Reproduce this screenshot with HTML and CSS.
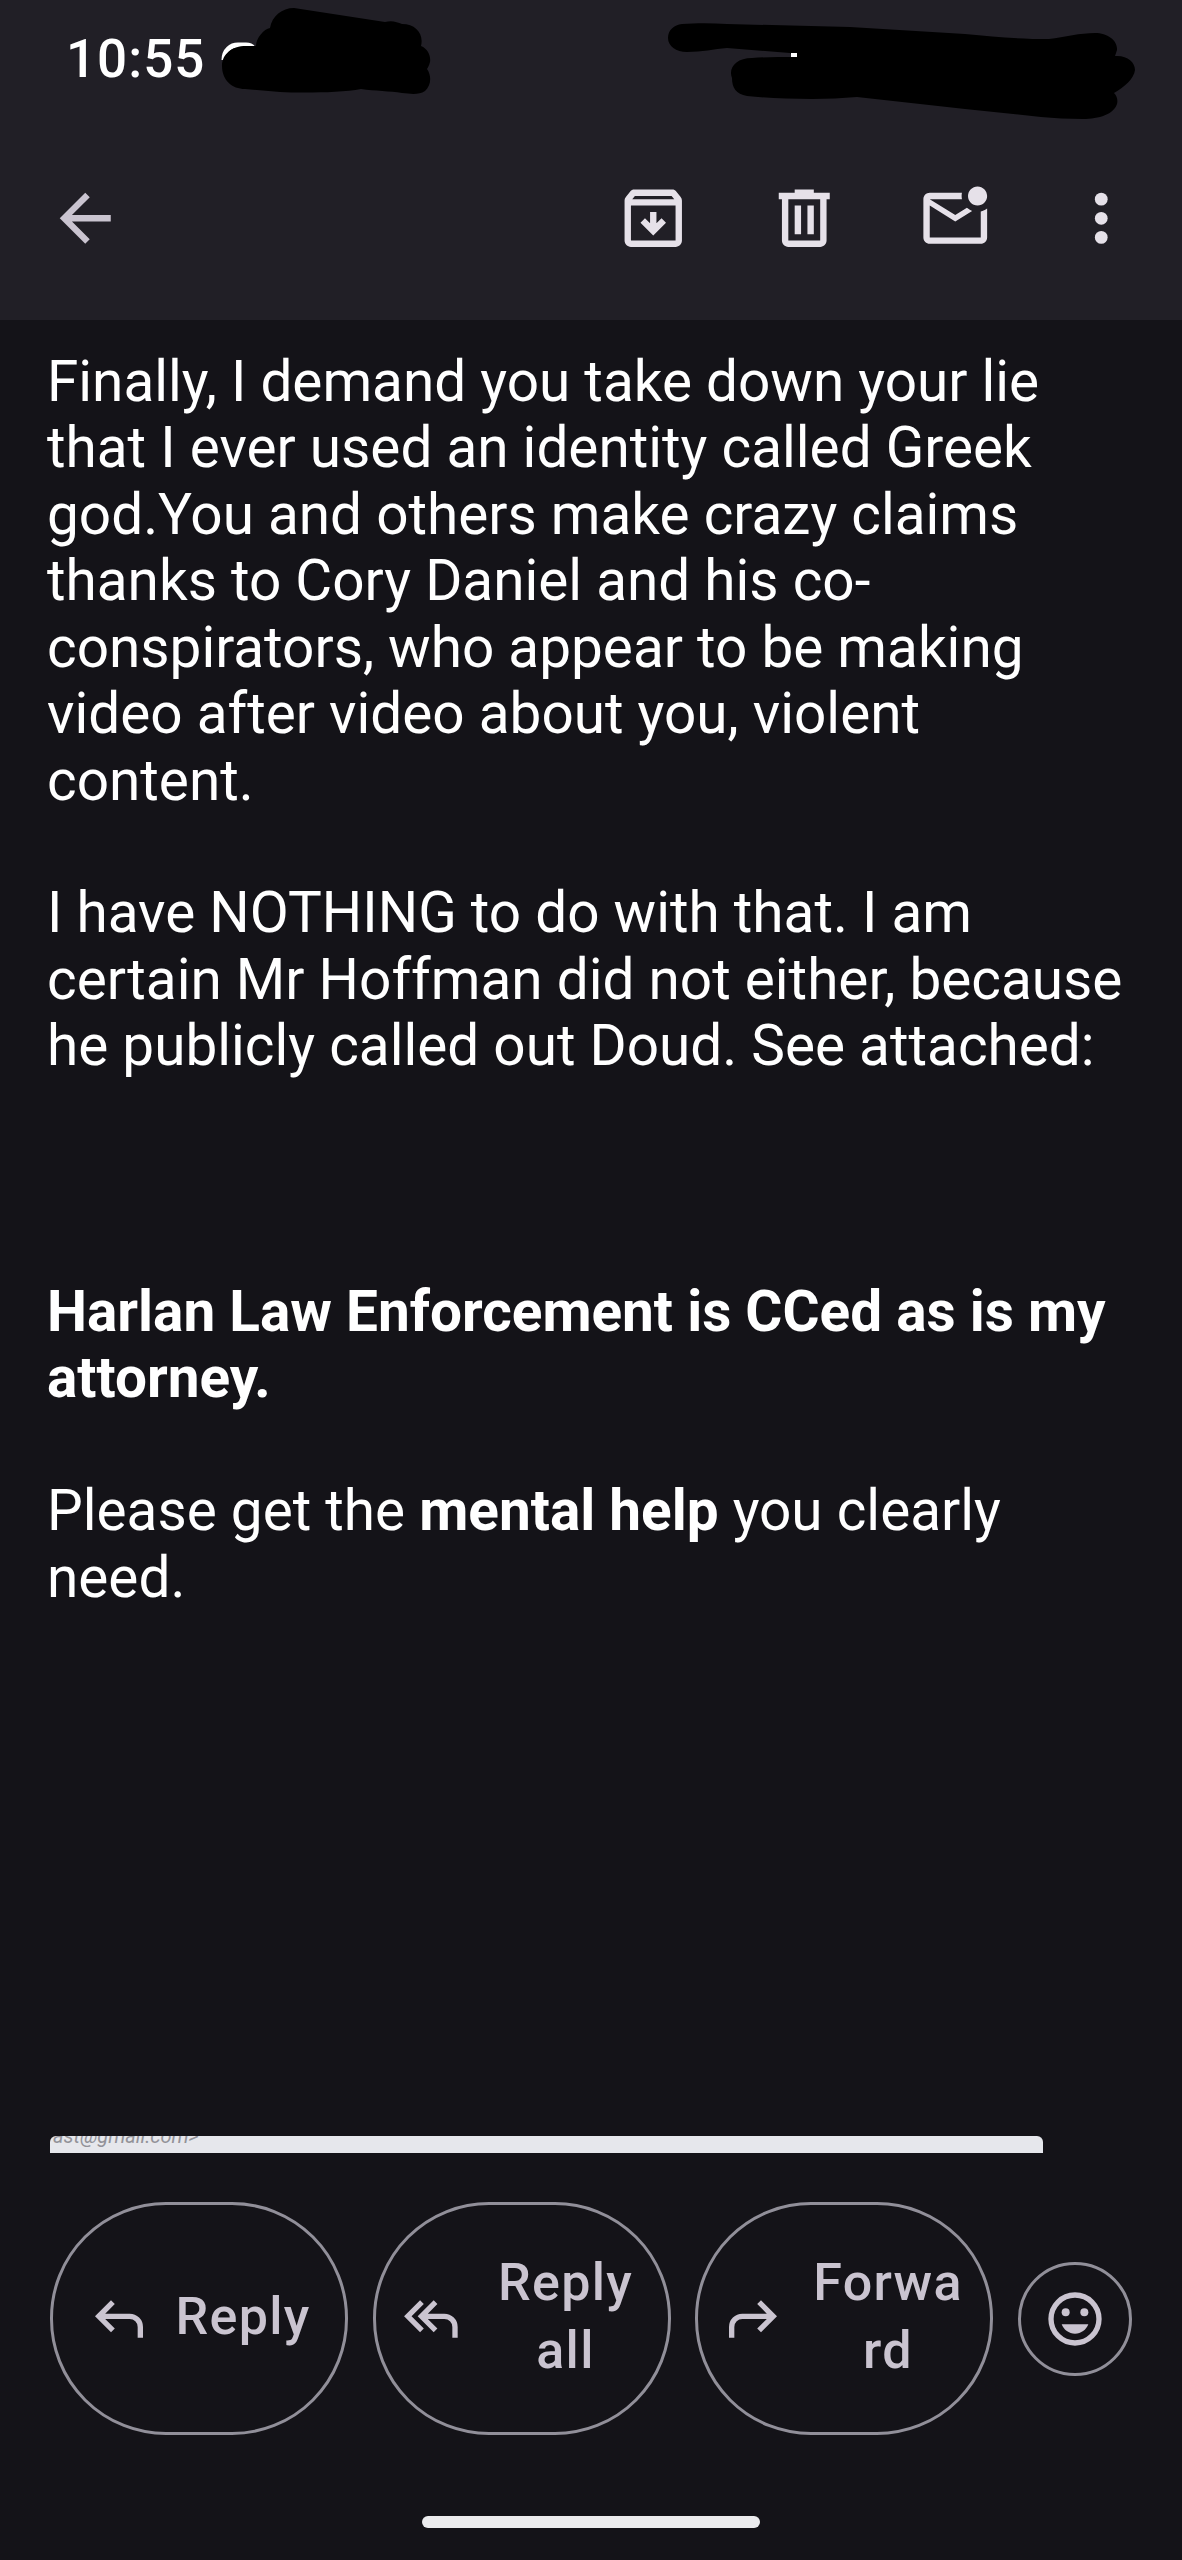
FILE: index.html
```html
<!DOCTYPE html>
<html lang="en">
    <head>
        <meta charset="UTF-8">
        <title>Mail</title>
        <meta name="viewport" content="width=device-width, initial-scale=1.0">
        <link rel="stylesheet" href="styles.css">
    </head>
    <body>
        <header>
            <div class="status">
                <span class="clock">10:55</span>
                <svg class="marker" viewBox="0 0 1182 130">
                    <path class="hint" d="M224 60C224 50 231 45 238 45H246Q251 45 253 48"/>
                    <path d="M222 66C222 54 232 46 246 46L256 46C256 38 264 29 270 28C272 16 282 8 294 8L385 22C392 20 397 22 402 24C416 24 424 34 421 46C428 49 431 56 430 62C429 66 428 67 427 69C432 76 431 86 425 91C419 95 411 94 402 93C390 91 375 91 361 89C340 93 300 93 280 92L245 89C232 89 222 80 222 66Z"/>
                    <path d="M668 38C668 30 674 25 682 24C696 23 712 23 727 24L850 27L965 34C995 37 1020 39 1049 39C1065 37 1080 33 1095 33C1108 33 1118 41 1117 50L1115 56C1127 55 1135 62 1135 70C1134 79 1124 87 1114 93C1117 96 1118 100 1117 104C1114 114 1099 119 1083 119C1068 119 1054 118 1041 117L965 109L857 97C842 98 828 99 812 99C788 99 765 98 747 96C736 94 732 88 732 78C728 68 736 58 752 58C766 57 780 57 793 57L790 53L727 48C714 49 702 52 687 52C676 52 668 46 668 38Z"/>
                    <rect class="dot" x="791" y="53" width="6" height="4"/>
                </svg>
            </div>
            <nav class="toolbar">
                <svg class="icon back" viewBox="0 0 24 24"><path d="M20 11H7.83l5.59-5.59L12 4l-8 8 8 8 1.41-1.41L7.83 13H20z"/></svg>
                <svg class="icon archive" viewBox="0 0 24 24"><path d="M20.54 5.23l-1.39-1.68C18.88 3.21 18.47 3 18 3H6c-.47 0-.88.21-1.16.55L3.46 5.23C3.17 5.57 3 6.02 3 6.5V19c0 1.1.9 2 2 2h14c1.1 0 2-.9 2-2V6.5c0-.48-.17-.93-.46-1.27zM6.24 5h11.52l.83 1H5.42zM5 19V8h14v11zM12 17.4l4-4-1.4-1.4-1.6 1.6V10h-2v3.6l-1.6-1.6L8 13.4z"/></svg>
                <svg class="icon delete" viewBox="0 0 24 24"><path d="M9 3v1H4v2h1v13c0 1.1.9 2 2 2h10c1.1 0 2-.9 2-2V6h1V4h-5V3zM7 6h10v13H7zm2 2v9h2V8zm4 0v9h2V8z"/></svg>
                <svg class="icon unread" viewBox="0 0 24 24"><path d="M22 8.98V18c0 1.1-.9 2-2 2H4c-1.1 0-2-.9-2-2V6c0-1.1.9-2 2-2h10.1c-.06.32-.1.66-.1 1s.04.68.1 1H4l8 5 3.67-2.29c.47.43 1.02.76 1.63.98L12 13 4 8v10h16V9.9c.74-.15 1.42-.48 2-.92zM16 5c0 1.66 1.34 3 3 3s3-1.34 3-3-1.34-3-3-3-3 1.34-3 3z"/></svg>
                <svg class="icon more" viewBox="0 0 24 24"><circle cx="12" cy="6" r="2"/><circle cx="12" cy="12" r="2"/><circle cx="12" cy="18" r="2"/></svg>
            </nav>
        </header>
        <main>
            Finally, I demand you take down your lie<br>
            that I ever used an identity called Greek<br>
            god.You and others make crazy claims<br>
            thanks to Cory Daniel and his co-<br>
            conspirators, who appear to be making<br>
            video after video about you, violent<br>
            content.<br>
            <br>
            I have NOTHING to do with that. I am<br>
            certain Mr Hoffman did not either, because<br>
            he publicly called out Doud. See attached:<br>
            <br>
            <br>
            <br>
            <b>Harlan Law Enforcement is CCed as is my<br>
            attorney.</b><br>
            <br>
            Please get the <b>mental help</b> you clearly<br>
            need.
        </main>
        <div class="attachment">ast@gmail.com&gt;</div>
        <div class="actions">
            <button class="pill">
                <svg viewBox="0 0 24 24"><path d="M19 19v-4q0-1.25-.875-2.125T16 12H6.825l3.6 3.6L9 17l-6-6 6-6 1.425 1.4L6.825 10H16q2.075 0 3.538 1.463T21 15v4z"/></svg>
                <span>Reply</span>
            </button>
            <button class="pill wide">
                <svg viewBox="0 0 24 24"><path d="M7.9 17l-6-6 6-6 1.4 1.4L4.7 11l4.6 4.6zM20 19v-4q0-1.25-.875-2.125T17 12h-6.2l3.6 3.6L13 17l-6-6 6-6 1.4 1.4-3.6 3.6H17q2.075 0 3.54 1.46T22 15v4z"/></svg>
                <span>Reply<br>all</span>
            </button>
            <button class="pill wide">
                <svg viewBox="0 0 24 24"><path d="M5 19v-4q0-1.25.875-2.125T8 12h9.175l-3.6 3.6L15 17l6-6-6-6-1.425 1.4 3.6 3.6H8q-2.075 0-3.538 1.463T3 15v4z"/></svg>
                <span>Forwa<br>rd</span>
            </button>
            <button class="emoji">
                <svg viewBox="0 0 24 24"><circle class="face" cx="12" cy="12" r="9"/><circle cx="8.5" cy="9.5" r="1.5"/><circle cx="15.5" cy="9.5" r="1.5"/><path d="M7 14h10c-.8 2.1-2.7 3.5-5 3.5S7.8 16.1 7 14z"/></svg>
            </button>
        </div>
        <div class="home"></div>
    </body>
</html>
```
FILE: styles.css
```css
*
{
    box-sizing: border-box;
}
body
{
    margin: 0;
    padding: 0;
    display: flex;
    flex-direction: column;
    height: 2560px;
    background-color: #141318;
    font-family: Roboto, 'Liberation Sans', sans-serif;
    overflow: hidden;
}

header
{
    height: 320px;
    background-color: #211F26;
}
header .status
{
    position: relative;
    height: 130px;
    padding: 27px 0 0 66px;
}
header .clock
{
    font-size: 53px;
    font-weight: 500;
    line-height: 64px;
    letter-spacing: 1px;
    color: #FFFFFF;
}
header .marker
{
    position: absolute;
    top: 0;
    left: 0;
    width: 1182px;
    height: 130px;
}
header .marker .hint
{
    fill: none;
    stroke: #FFFFFF;
    stroke-width: 5;
}
header .marker .dot { fill: #FFFFFF }

header .toolbar
{
    display: flex;
    align-items: center;
    height: 177px;
    padding: 0 43px 0 47px;
}
header .icon
{
    width: 76.5px;
    height: 76.5px;
    fill: #E6E1E9;
}
header .back
{
    margin-right: auto;
    fill: #CAC4D0;
}
header .archive, header .delete { margin-right: 74.5px }
header .unread { margin-right: 69.5px }

main
{
    flex: 1;
    padding: 29px 0 0 47px;
    font-size: 56.7px;
    line-height: 66.42px;
    white-space: nowrap;
    color: #FFFFFF;
}

.attachment
{
    width: 993px;
    height: 17px;
    margin-left: 50px;
    padding-left: 3px;
    overflow: hidden;
    border-radius: 6px 6px 0 0;
    background-color: #E6E7EC;
    font-size: 20px;
    font-style: italic;
    line-height: 0;
    color: #929298;
}

.actions
{
    display: flex;
    align-items: center;
    gap: 24.5px;
    margin-top: 49px;
    padding-left: 50px;
}
.actions button
{
    display: flex;
    align-items: center;
    justify-content: center;
    padding: 0;
    border: 3px solid #918F99;
    background: none;
    font-family: inherit;
    color: #CAC4D0;
}
.actions svg
{
    flex: none;
    width: 64px;
    height: 64px;
    fill: #CAC4D0;
}
.actions .pill
{
    gap: 24px;
    width: 298px;
    height: 233px;
    border-radius: 116px;
    font-size: 52px;
    font-weight: 500;
    line-height: 68px;
    letter-spacing: 1.3px;
}
.actions .pill span { padding-bottom: 3px }
.actions .wide span { width: 158px }
.actions .emoji
{
    width: 114px;
    height: 114px;
    border-radius: 50%;
}
.actions .face
{
    fill: none;
    stroke: #CAC4D0;
    stroke-width: 2;
}

.home
{
    width: 338px;
    height: 12px;
    margin: 81px auto 32px;
    border-radius: 6px;
    background-color: #ECECEE;
}
```
